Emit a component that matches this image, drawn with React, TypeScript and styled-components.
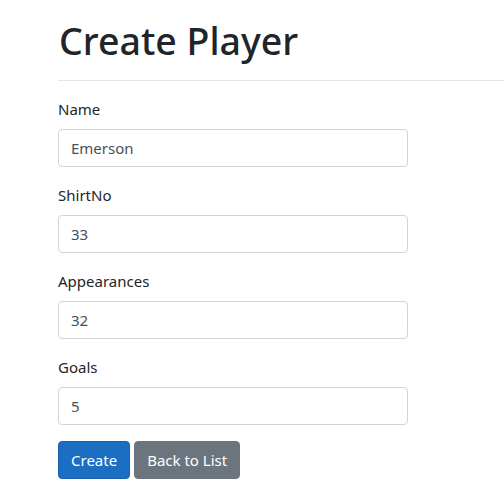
import React from "react";
import styled, { createGlobalStyle } from "styled-components";

const GlobalStyle = createGlobalStyle`
  body {
    margin: 0;
    font-family: "Noto Sans", "Open Sans", sans-serif;
    color: #212529;
    background: #ffffff;
  }
  * { box-sizing: border-box; }
`;

const Page = styled.div`
  padding: 17px 0 0 58px;
  overflow: hidden;
`;

const Title = styled.h1`
  margin: 0;
  height: 47px;
  font-size: 37.5px;
  font-weight: 500;
  line-height: 47px;
  padding-left: 1px;
`;

const Rule = styled.hr`
  margin: 16px 0 16px 0;
  border: 0;
  border-top: 1px solid rgba(0, 0, 0, 0.1);
  width: 600px;
`;

const Form = styled.form`
  width: 350px;
`;

const Group = styled.div`
  margin-bottom: 16px;
`;

const Label = styled.label`
  display: block;
  font-size: 15px;
  line-height: 24px;
  margin-bottom: 8px;
`;

const Input = styled.input`
  display: block;
  width: 100%;
  height: 38px;
  padding: 6px 12px;
  font-family: inherit;
  font-size: 15px;
  line-height: 24px;
  color: #495057;
  background: #fff;
  border: 1px solid #ced4da;
  border-radius: 4px;
  outline: none;
`;

const Actions = styled.div`
  display: flex;
  gap: 4px;
`;

const Button = styled.button<{ $variant: "primary" | "secondary" }>`
  height: 38px;
  padding: 6px 12px;
  font-family: inherit;
  font-size: 15px;
  line-height: 24px;
  color: #fff;
  border-radius: 4px;
  border: 1px solid ${(p) => (p.$variant === "primary" ? "#1861ac" : "#6c757d")};
  background: ${(p) => (p.$variant === "primary" ? "#1b6ec2" : "#6c757d")};
  cursor: pointer;
`;

const fields = [
  { label: "Name", value: "Emerson" },
  { label: "ShirtNo", value: "33" },
  { label: "Appearances", value: "32" },
  { label: "Goals", value: "5" },
];

const App = () => {
  return (
    <>
      <GlobalStyle />
      <Page>
        <Title>Create Player</Title>
        <Rule />
        <Form onSubmit={(e) => e.preventDefault()}>
          {fields.map((f) => (
            <Group key={f.label}>
              <Label>{f.label}</Label>
              <Input defaultValue={f.value} />
            </Group>
          ))}
          <Actions>
            <Button $variant="primary" type="submit">Create</Button>
            <Button $variant="secondary" type="button">Back to List</Button>
          </Actions>
        </Form>
      </Page>
    </>
  );
};

export default App;
